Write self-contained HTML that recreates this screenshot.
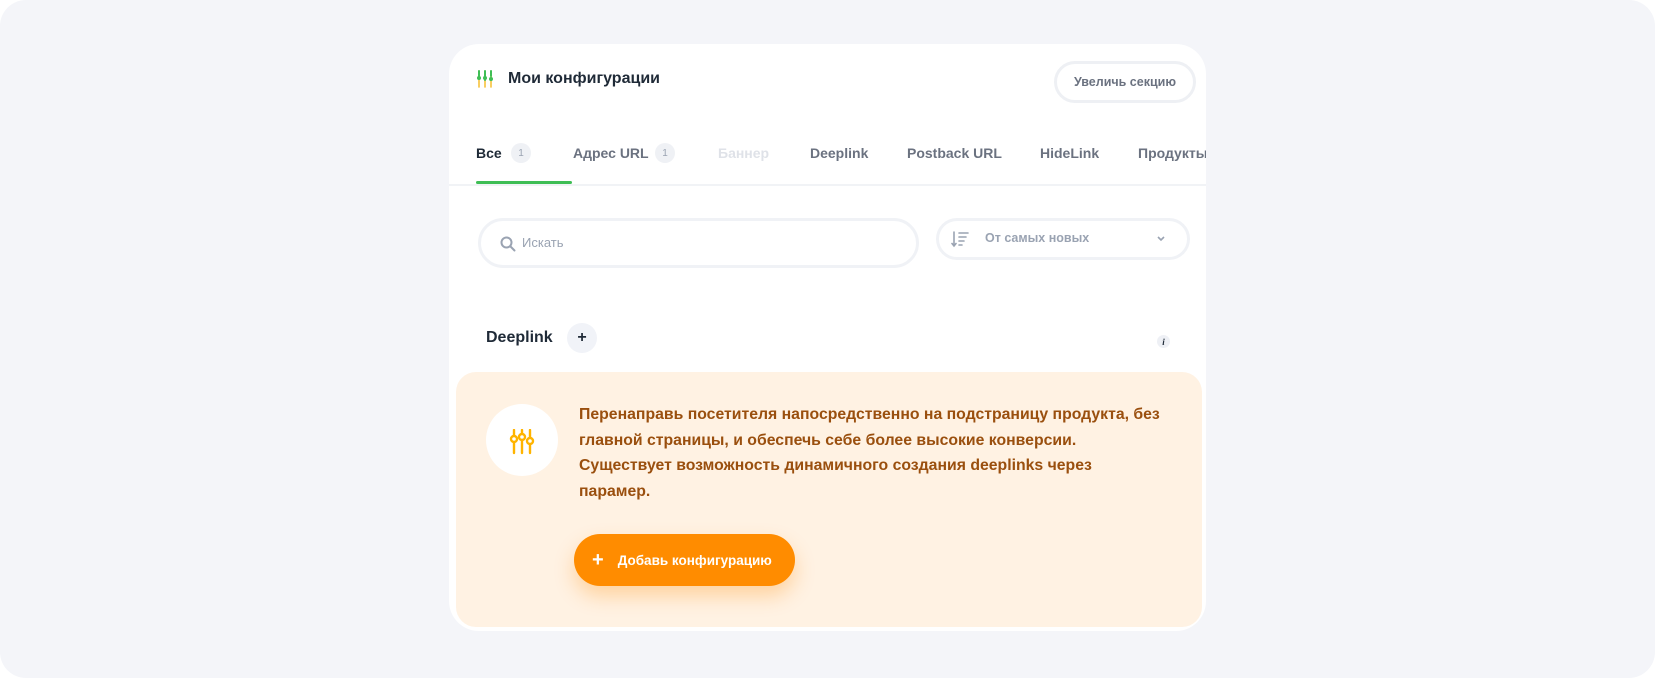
<!DOCTYPE html>
<html><head><meta charset="utf-8"><style>
*{box-sizing:border-box;margin:0;padding:0}
html,body{width:1655px;height:678px;background:#fff;overflow:hidden;font-family:"Liberation Sans",sans-serif}
.bg{position:absolute;left:0;top:0;width:1655px;height:678px;background:#f4f5f9;border-radius:26px}
.card{position:absolute;left:449px;top:44px;width:757px;height:587px;background:#fff;border-radius:30px;overflow:hidden}
.abs{position:absolute;white-space:nowrap}
.title{left:59px;top:26px;font-size:16px;font-weight:bold;color:#1f2a37}
.btn{left:605px;top:17px;width:142px;height:42px;border:3px solid #eef0f4;border-radius:21px;font-size:12.5px;font-weight:bold;color:#6b7280;display:flex;align-items:center;justify-content:center}
.tab{top:101px;font-size:14px;font-weight:bold;color:#6b7280}
.badge{top:99px;width:20px;height:20px;border-radius:10px;background:#eff1f5;color:#9aa3b2;font-size:10px;display:flex;align-items:center;justify-content:center}
.uline{left:27px;top:137px;width:96px;height:3px;background:#3fbe55;border-radius:2px}
.sep{left:0;top:140px;width:757px;height:2px;background:#f1f3f6}
.search{left:29px;top:174px;width:441px;height:50px;border:3px solid #f0f2f6;border-radius:25px}
.sort{left:487px;top:174px;width:254px;height:42px;border:3px solid #f0f2f6;border-radius:21px}
.ph{font-size:13px;color:#9aa3b2}
.orange{left:7px;top:328px;width:746px;height:255px;background:#fff2e3;border-radius:20px}
.txt{left:123px;top:30px;font-size:15.8px;line-height:25.5px;font-weight:bold;color:#9a4f0e}
.add{left:118px;top:162px;width:221px;height:52px;border-radius:26px;background:#ff8c00;color:#fff;font-size:13.5px;font-weight:bold;box-shadow:0 10px 20px rgba(255,140,0,.3);display:flex;align-items:center;padding-left:18px}
</style></head><body>
<div class="bg"></div>
<div class="card">
  <svg class="abs" style="left:27px;top:26px" width="18" height="18" viewBox="0 0 18 18" fill="none" stroke="#3fbe55" stroke-width="2" stroke-linecap="round">
    <path d="M3 1v16M9 1v16M15 1v16" stroke="#f6c13b" stroke-width="1.6"/>
    <path d="M3 1v6M9 1v9M15 1v5" />
    <circle cx="3" cy="8" r="2" fill="#3fbe55" stroke="none"/><circle cx="9" cy="8" r="2" fill="#3fbe55" stroke="none"/><circle cx="15" cy="9" r="2" fill="#3fbe55" stroke="none"/>
  </svg>
  <div class="abs title">Мои конфигурации</div>
  <div class="abs btn">Увеличь секцию</div>

  <div class="abs tab" style="left:27px;color:#1f2a37">Все</div>
  <div class="abs badge" style="left:62px">1</div>
  <div class="abs tab" style="left:124px">Адрес URL</div>
  <div class="abs badge" style="left:206px">1</div>
  <div class="abs tab" style="left:269px;color:#dfe2e8">Баннер</div>
  <div class="abs tab" style="left:361px">Deeplink</div>
  <div class="abs tab" style="left:458px">Postback URL</div>
  <div class="abs tab" style="left:591px">HideLink</div>
  <div class="abs tab" style="left:689px">Продукты</div>
  <div class="abs uline"></div>
  <div class="abs sep"></div>

  <div class="abs search">
    <svg class="abs" style="left:19px;top:15px" width="16" height="16" viewBox="0 0 16 16" fill="none" stroke="#9aa3b2" stroke-width="2"><circle cx="6.5" cy="6.5" r="5"/><path d="M10.5 10.5L14.5 14.5" stroke-linecap="round"/></svg>
    <div class="abs ph" style="left:41px;top:14px">Искать</div>
  </div>
  <div class="abs sort">
    <svg class="abs" style="left:12px;top:9px" width="18" height="18" viewBox="0 0 18 18" fill="none" stroke="#9aa3b2" stroke-width="1.6" stroke-linecap="round"><path d="M3 2v14M1 13.5l2 2.5 2-2.5M8 3h9M8 7h7M8 11h5M8 15h3"/></svg>
    <div class="abs ph" style="left:46px;top:10px;font-weight:bold;font-size:12.5px">От самых новых</div>
    <svg class="abs" style="left:217px;top:14px" width="10" height="8" viewBox="0 0 10 8" fill="none" stroke="#9aa3b2" stroke-width="1.6"><path d="M2 2l3 3 3-3"/></svg>
  </div>

  <div class="abs" style="left:37px;top:285px;font-size:16px;font-weight:bold;color:#1f2a37">Deeplink</div>
  <div class="abs" style="left:118px;top:279px;width:30px;height:30px;border-radius:15px;background:#f1f3f8;font-size:16px;font-weight:bold;color:#1f2a37;display:flex;align-items:center;justify-content:center">+</div>
  <div class="abs" style="left:708px;top:291px;width:13px;height:13px;border-radius:7px;background:#eef0f5;font-size:9px;font-style:italic;font-weight:bold;color:#1f2a37;display:flex;align-items:center;justify-content:center;font-family:'Liberation Serif',serif">i</div>

  <div class="abs orange">
    <div class="abs" style="left:30px;top:32px;width:72px;height:72px;border-radius:36px;background:#fff"></div>
    <svg class="abs" style="left:53px;top:57px" width="26" height="26" viewBox="0 0 26 26" fill="none" stroke="#ffb400" stroke-width="2.4" stroke-linecap="round">
      <path d="M5 1v5M5 14v10M13 1v3M13 11v13M21 1v7M21 16v8"/>
      <circle cx="5" cy="10" r="3"/><circle cx="13" cy="8" r="3"/><circle cx="21" cy="12" r="3"/>
    </svg>
    <div class="abs txt">Перенаправь посетителя напосредственно на подстраницу продукта, без<br>главной страницы, и обеспечь себе более высокие конверсии.<br>Существует возможность динамичного создания deeplinks через<br>парамер.</div>
    <div class="abs add"><span style="font-size:20px;margin-right:14px;font-weight:bold">+</span>Добавь конфигурацию</div>
  </div>
</div>
</body></html>
